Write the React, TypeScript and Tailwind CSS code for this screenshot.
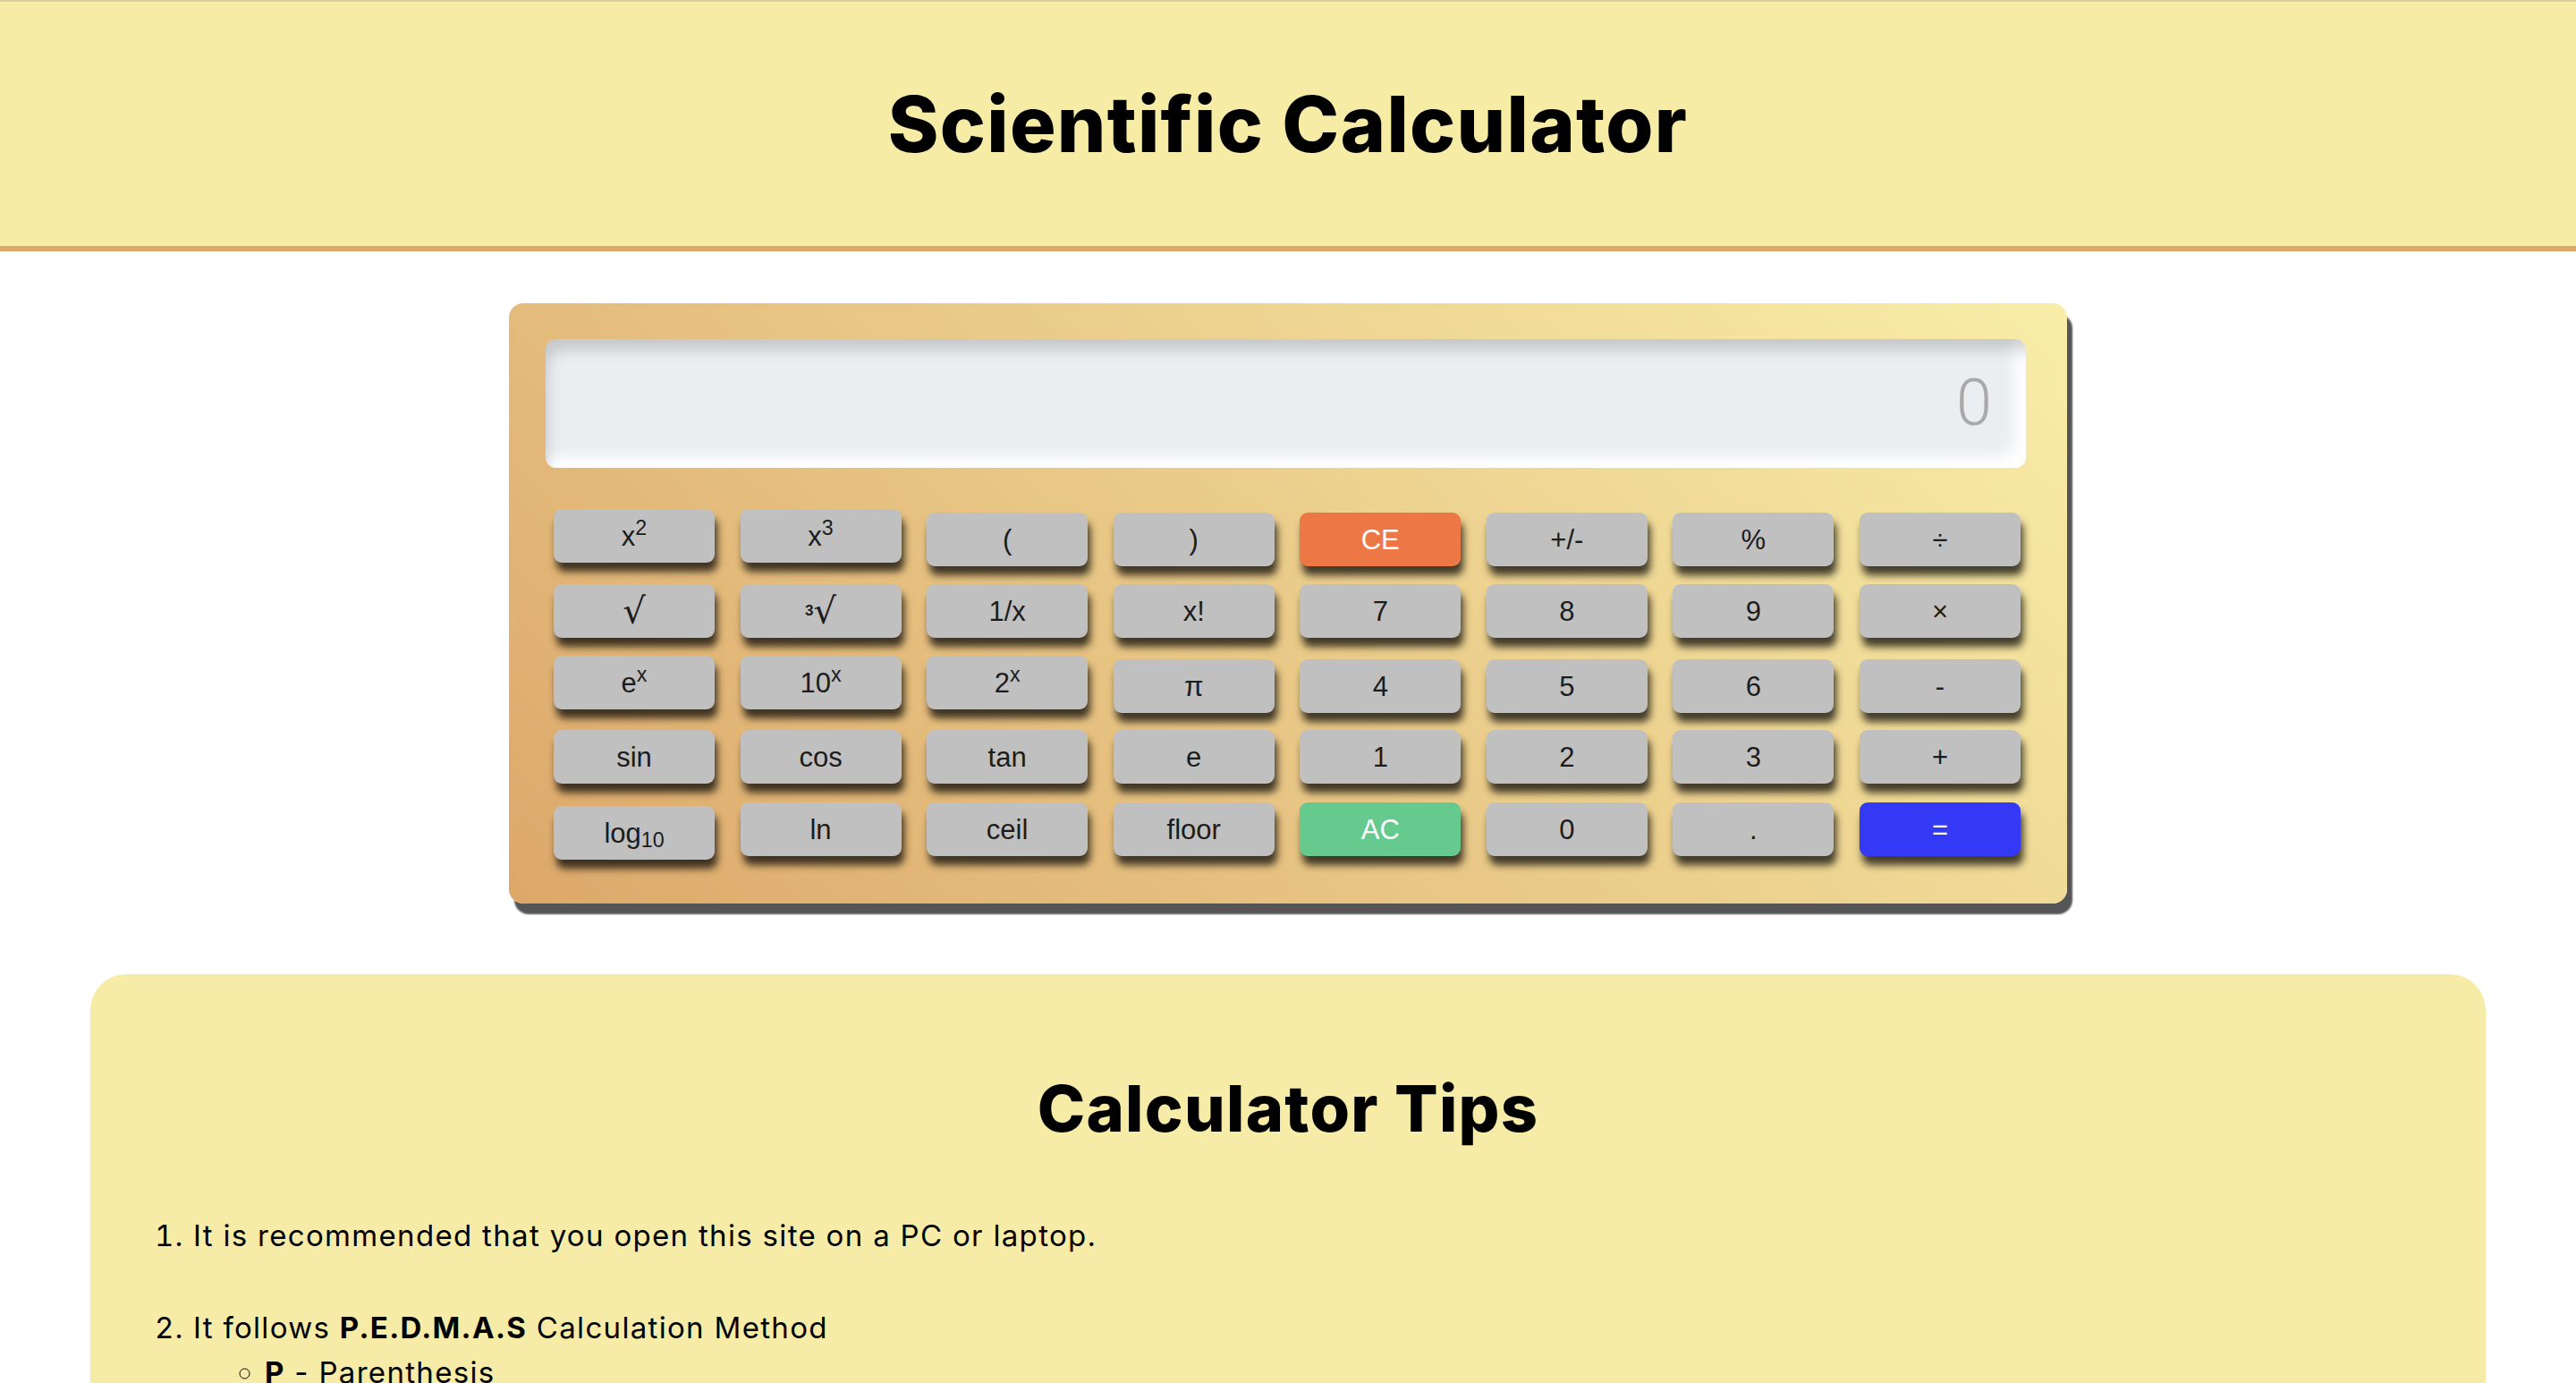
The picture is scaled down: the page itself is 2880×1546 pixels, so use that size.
import React from "react";

type Key = {
  label: React.ReactNode;
  tone?: "gray" | "orange" | "green" | "blue";
  shift?: "up" | "down";
};

const Root = ({ n }: { n?: string }) => (
  <>
    {n && <sup className="text-[0.55em] font-bold">{n}</sup>}
    <span className="font-['DejaVu_Sans',sans-serif] text-[40px] leading-none">√</span>
  </>
);

const rows: { gap: string; keys: Key[] }[] = [
  {
    gap: "mt-0",
    keys: [
      { label: <>x<sup>2</sup></>, shift: "up" },
      { label: <>x<sup>3</sup></>, shift: "up" },
      { label: "(" },
      { label: ")" },
      { label: "CE", tone: "orange" },
      { label: "+/-" },
      { label: "%" },
      { label: "÷" },
    ],
  },
  {
    gap: "mt-[20px]",
    keys: [
      { label: <Root /> },
      { label: <Root n="3" /> },
      { label: "1/x" },
      { label: "x!" },
      { label: "7" },
      { label: "8" },
      { label: "9" },
      { label: "×" },
    ],
  },
  {
    gap: "mt-[24px]",
    keys: [
      { label: <>e<sup>x</sup></>, shift: "up" },
      { label: <>10<sup>x</sup></>, shift: "up" },
      { label: <>2<sup>x</sup></>, shift: "up" },
      { label: "π" },
      { label: "4" },
      { label: "5" },
      { label: "6" },
      { label: "-" },
    ],
  },
  {
    gap: "mt-[19px]",
    keys: [
      { label: "sin" },
      { label: "cos" },
      { label: "tan" },
      { label: "e" },
      { label: "1" },
      { label: "2" },
      { label: "3" },
      { label: "+" },
    ],
  },
  {
    gap: "mt-[21px]",
    keys: [
      { label: <>log<sub>10</sub></>, shift: "down" },
      { label: "ln" },
      { label: "ceil" },
      { label: "floor" },
      { label: "AC", tone: "green" },
      { label: "0" },
      { label: "." },
      { label: "=", tone: "blue" },
    ],
  },
];

const toneClass = {
  gray: "bg-[#C0C0C0] text-[#1c1c1c]",
  orange: "bg-[#EE7845] text-white",
  green: "bg-[#66CA8E] text-white",
  blue: "bg-[#3339F5] text-white",
};

function CalcKey({ k }: { k: Key }) {
  const shift = k.shift === "up" ? "-translate-y-1" : k.shift === "down" ? "translate-y-1" : "";
  return (
    <button
      className={`w-[180px] h-[60px] shrink-0 rounded-[9px] flex items-center justify-center font-['Liberation_Sans',Arial,sans-serif] text-[31px] leading-none shadow-[3px_10px_9px_rgba(0,0,0,0.72)] ${toneClass[k.tone ?? "gray"]} ${shift}`}
    >
      <span>{k.label}</span>
    </button>
  );
}

export default function App() {
  return (
    <div className="min-h-screen bg-white font-['Inter',sans-serif] text-black">
      <header className="h-[281px] bg-[#F7ECA6] border-t-2 border-t-[#D8D09A] border-b-[6px] border-b-[#DDA66A] flex items-center justify-center">
        <h1 className="text-[86px] font-extrabold leading-none tracking-[0.015em]">Scientific Calculator</h1>
      </header>

      <main className="flex flex-col items-center pt-[58px]">
        <div className="w-[1742px] rounded-[16px] bg-linear-[45deg] from-[#DCA86A] to-[#F8EEA9] shadow-[6px_12px_2px_#555] pt-[40px] pb-[53px] pl-[41px] pr-[46px]">
          <div className="h-[144px] rounded-[12px] bg-[#EBEEF1] shadow-[inset_8px_18px_16px_-6px_rgba(0,0,0,0.16),inset_-18px_-18px_16px_-6px_#ffffff] flex items-center justify-end pr-[38px]">
            <span className="font-['Roboto',sans-serif] font-light text-[72px] leading-none text-[#A9A9A9]">0</span>
          </div>

          <div className="mt-[50px] ml-[9px] w-[1640px] flex flex-col">
            {rows.map((row, i) => (
              <div key={i} className={`flex gap-[28.57px] ${row.gap}`}>
                {row.keys.map((k, j) => (
                  <CalcKey key={j} k={k} />
                ))}
              </div>
            ))}
          </div>
        </div>
      </main>

      <section className="mx-[101px] mt-[79px] mb-[80px] rounded-[40px] bg-[#F7ECA7] pt-[114px] pb-[80px]">
        <h2 className="text-center text-[72px] font-extrabold leading-none tracking-[0.018em]">Calculator Tips</h2>
        <ol className="mt-[81px] list-decimal pl-[115px] pr-[100px] text-[33px] leading-[50px] tracking-[0.04em]">
          <li>It is recommended that you open this site on a PC or laptop.</li>
          <li className="mt-[53px]">
            It follows <b>P.E.D.M.A.S</b> Calculation Method
            <ul className="list-[circle] pl-[80px]">
              <li><b>P</b> - Parenthesis</li>
              <li><b>E</b> - Exponents</li>
              <li><b>D</b> - Division</li>
              <li><b>M</b> - Multiplication</li>
              <li><b>A</b> - Addition</li>
              <li><b>S</b> - Subtraction</li>
            </ul>
          </li>
          <li className="mt-[53px]">Use the CE button to clear the last entry and AC to clear everything.</li>
        </ol>
      </section>
    </div>
  );
}
